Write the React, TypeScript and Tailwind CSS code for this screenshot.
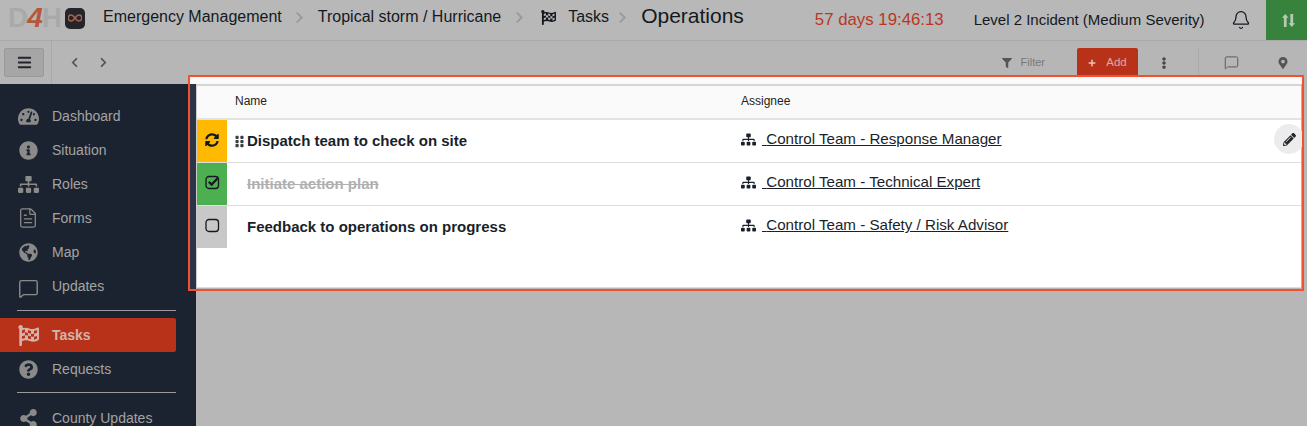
import { Bell, FileText, MessageSquare } from "lucide-react";
import {
  FaBars,
  FaChevronLeft,
  FaChevronRight,
  FaEllipsisV,
  FaFilter,
  FaFlagCheckered,
  FaGlobeAmericas,
  FaGripVertical,
  FaInfoCircle,
  FaMapMarkerAlt,
  FaPencilAlt,
  FaPlus,
  FaQuestionCircle,
  FaShareAlt,
  FaSitemap,
  FaSyncAlt,
  FaTachometerAlt,
} from "react-icons/fa";

const topNav = [
  { label: "Dashboard", icon: <FaTachometerAlt size={21} /> },
  { label: "Situation", icon: <FaInfoCircle size={19} /> },
  { label: "Roles", icon: <FaSitemap size={21} /> },
  { label: "Forms", icon: <FileText size={22} strokeWidth={1.4} /> },
  { label: "Map", icon: <FaGlobeAmericas size={19} /> },
  { label: "Updates", icon: <MessageSquare size={21} strokeWidth={1.6} className="mt-[5px]" /> },
];

function CheckBox({ checked }: { checked: boolean }) {
  return (
    <svg width="15" height="15" viewBox="0 0 15 15" fill="none" stroke="currentColor">
      <rect x="1" y="1.500" width="12.500" height="12" rx="3" strokeWidth="1.300" />
      {checked && <path d="M3.800 6.800 6.600 9.600 12.600 3.200" strokeWidth="2.200" />}
    </svg>
  );
}

const rows = [
  {
    name: "Dispatch team to check on site",
    assignee: "Control Team - Response Manager",
    color: "bg-[#ffb900]",
    icon: <FaSyncAlt size={14} />,
    done: false,
    grip: true,
  },
  {
    name: "Initiate action plan",
    assignee: "Control Team - Technical Expert",
    color: "bg-[#4caf50]",
    icon: <CheckBox checked />,
    done: true,
    grip: false,
  },
  {
    name: "Feedback to operations on progress",
    assignee: "Control Team - Safety / Risk Advisor",
    color: "bg-[#c8c8c8]",
    icon: <CheckBox checked={false} />,
    done: false,
    grip: false,
  },
];

function Crumb({ className = "mx-[11.5px]" }: { className?: string }) {
  return <FaChevronRight size={13} className={`shrink-0 text-[#9b9b9b] ${className}`} />;
}

function NavItem({ label, icon }: { label: string; icon: React.ReactNode }) {
  return (
    <div className="flex h-[34px] items-center text-[14px] text-[#a3a3a3]">
      <div className="flex w-[52px] shrink-0 justify-center pl-[17px] pr-[13px] text-[#8a8a8a]">{icon}</div>
      <span>{label}</span>
    </div>
  );
}

export default function App() {
  return (
    <div
      className="relative flex h-[426px] w-[1307px] flex-col overflow-hidden bg-[#b7b7b7] text-[#14181f]"
      style={{ fontFamily: '"Liberation Sans", Arial, sans-serif' }}
    >
      {/* Top bar */}
      <header className="flex h-[41px] shrink-0 items-center border-b border-[#a9a9a9] bg-[#b8b8b8]">
        <div className="flex w-[103px] shrink-0 items-center pb-[4px] pl-[8px]">
          <span className="w-[57px] whitespace-nowrap text-[28px] font-bold leading-none tracking-[-1px] text-[#a9a9a9]">
            D<span className="italic text-[#b5573c]">4</span>H
          </span>
          <div className="flex h-[21px] w-[20px] items-center justify-center rounded-[5px] bg-[#23252b]">
            <svg width="14" height="8" viewBox="0 0 14 8" fill="none" stroke="#a8624d" strokeWidth="1.500">
              <path d="M7 4C5.500 1.800 4.500 1 3.200 1a3 3 0 0 0 0 6c1.300 0 2.300-.8 3.800-3s2.500-3 3.800-3a3 3 0 0 1 0 6C9.500 7 8.500 6.200 7 4z" />
            </svg>
          </div>
        </div>
        <div className="flex items-center pb-[6px]">
          <span className="whitespace-nowrap text-[16px]">Emergency Management</span>
          <Crumb />
          <span className="whitespace-nowrap text-[16px]">Tropical storm / Hurricane</span>
          <Crumb />
          <FaFlagCheckered size={15} className="ml-[4px] mr-[12px] shrink-0" />
          <span className="text-[16px]">Tasks</span>
          <Crumb className="ml-[7px] mr-[12px]" />
          <span className="pb-[3px] text-[21px]">Operations</span>
        </div>
        <span className="ml-[71px] whitespace-nowrap text-[16.8px] text-[#b8371f]">57 days 19:46:13</span>
        <span className="ml-[30px] whitespace-nowrap text-[15px]">Level 2 Incident (Medium Severity)</span>
        <Bell size={20} strokeWidth={1.5} className="ml-[26px] shrink-0" />
        <div className="ml-auto flex h-full w-[41px] items-center justify-center bg-[#37833d] pl-[3px] text-[#b5c9b5]">
          <svg width="13" height="15" viewBox="0 0 14 16" fill="currentColor">
            <path d="M3.500 1 7 5H5v10H2V5H0zM10.500 15 7 11h2V1h3v10h2z" />
          </svg>
        </div>
      </header>

      {/* Toolbar */}
      <div className="flex h-[43px] shrink-0 items-center bg-[#b6b6b6] text-[#555]">
        <div className="flex h-full w-[52px] shrink-0 items-center border-r border-[#a9a9a9] pl-[4px]">
          <button className="flex h-[29px] w-[40px] items-center justify-center rounded-[2px] border border-[#999] bg-[#a6a6a6] text-[#22252b]">
            <FaBars size={15} />
          </button>
        </div>
        <FaChevronLeft size={11} className="ml-[17px]" />
        <FaChevronRight size={11} className="ml-[18px]" />
        <div className="ml-auto flex h-full items-center">
          <FaFilter size={10} className="text-[#555]" />
          <span className="ml-[9px] text-[11px] text-[#787878]">Filter</span>
          <button className="ml-[32px] flex h-[29px] w-[61px] items-center justify-center gap-[10px] rounded-[2px] bg-[#b8321a] text-[11.5px] text-[#dca99e]">
            <FaPlus size={8} className="text-[#e6c6bd]" />
            Add
          </button>
          <FaEllipsisV size={12} className="ml-[20px] text-[#444]" />
          <div className="ml-[28px] h-[29px] border-l border-[#a9a9a9]" />
          <MessageSquare size={15} strokeWidth={1.5} className="ml-[25px] text-[#555]" />
          <FaMapMarkerAlt size={12} className="ml-[38px] mr-[18px] text-[#555]" />
        </div>
      </div>

      <div className="flex min-h-0 flex-1">
        {/* Sidebar */}
        <aside className="w-[196px] shrink-0 overflow-hidden bg-[#1c2330] pt-[15px]">
          {topNav.map((item) => (
            <NavItem key={item.label} label={item.label} icon={item.icon} />
          ))}
          <div className="ml-[17px] mr-[20px] mt-[7px] border-t border-[#9b9b9b]" />
          <div className="mr-[20px] mt-[7px] flex h-[34px] items-center rounded-r-[2px] bg-[#b8321a] text-[14px] font-bold text-[#d2b4ac]">
            <div className="flex w-[52px] shrink-0 justify-center pl-[17px] pr-[13px]">
              <FaFlagCheckered size={21} />
            </div>
            Tasks
          </div>
          <NavItem label="Requests" icon={<FaQuestionCircle size={19} />} />
          <div className="ml-[17px] mr-[20px] mt-[6px] border-t border-[#9b9b9b]" />
          <div className="mt-[8px]">
            <NavItem label="County Updates" icon={<FaShareAlt size={19} />} />
          </div>
        </aside>

        {/* Task table */}
        <main className="min-w-0 flex-1 pr-[6px]">
          <div className="h-[204px] border-b border-l border-b-[#ddd] border-l-[#ccc] bg-white">
            <div className="flex h-[36px] items-center border-b-2 border-t-2 border-b-[#e2e2e2] border-t-[#d5d5d5] bg-[#fafafa] pb-[2px] text-[12px] text-[#222]">
              <span className="ml-[38px] w-[506px]">Name</span>
              <span>Assignee</span>
            </div>
            {rows.map((row, i) => (
              <div
                key={row.name}
                className={`relative flex ${i < rows.length - 1 ? "h-[43px] border-b border-[#ddd]" : "h-[42px]"}`}
              >
                <div className={`flex w-[30px] shrink-0 items-center justify-center pb-[3px] text-[#14181f] ${row.color}`}>
                  {row.icon}
                </div>
                <div className="flex w-[514px] shrink-0 items-center">
                  <div className="flex w-[20px] shrink-0 justify-start pl-[6px]">
                    {row.grip && <FaGripVertical size={13} className="text-[#3a3f48]" />}
                  </div>
                  <span
                    className={`text-[15px] font-bold ${row.done ? "text-[#b0b0b0] line-through" : "text-[#1a1f2b]"}`}
                  >
                    {row.name}
                  </span>
                </div>
                <div className="flex items-center pb-[3px] text-[15.15px] text-[#1a1f2b]">
                  <FaSitemap size={15} className="mr-[6px] shrink-0" />
                  <span className="underline">&nbsp;{row.assignee}</span>
                </div>
                {row.grip && (
                  <div className="absolute right-[-3px] top-[4px] flex h-[30px] w-[30px] items-center justify-center rounded-full bg-[#ececec] text-[#22252b]">
                    <FaPencilAlt size={13} />
                  </div>
                )}
              </div>
            ))}
          </div>
        </main>
      </div>

      {/* Highlight round the table */}
      <div className="absolute left-[188px] top-[75px] h-[216px] w-[1116px] border-2 border-[#f4502f]">
        <div className="h-[7px] bg-[#fafafa]" />
        <div className="h-[205px] w-[6px] bg-[#2b3545]" />
      </div>
    </div>
  );
}
